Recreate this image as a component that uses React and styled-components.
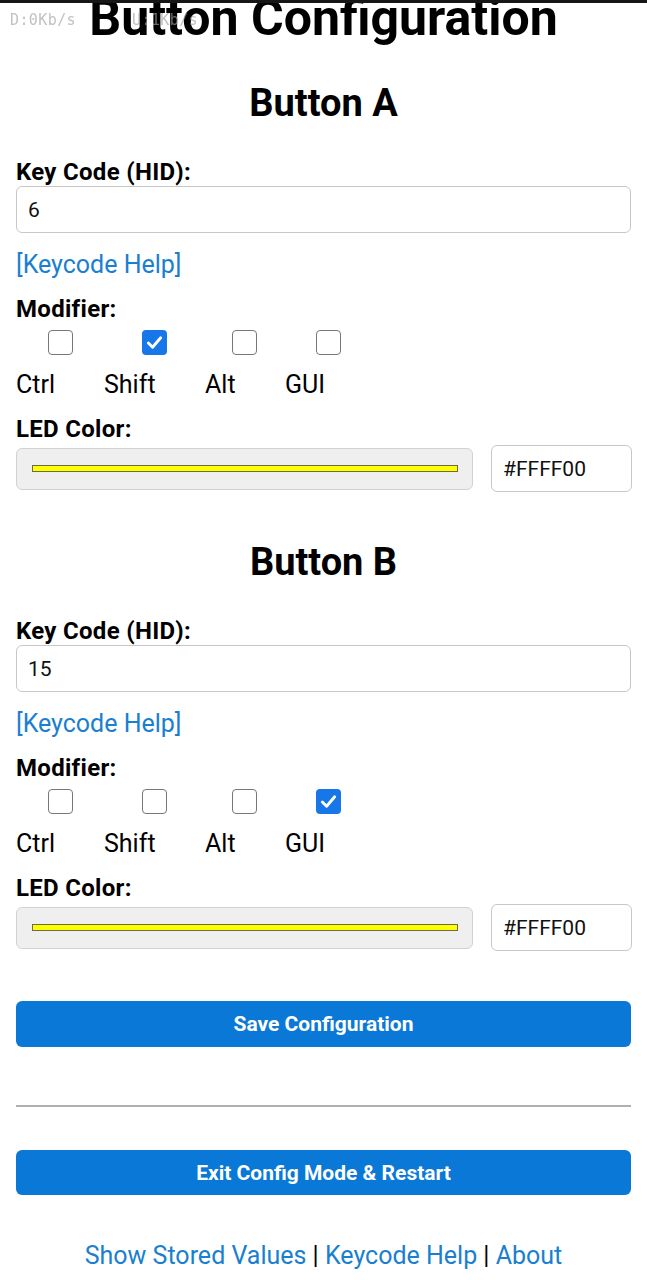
import React from "react";
import styled, { createGlobalStyle } from "styled-components";

const Global = createGlobalStyle`
  html, body { margin: 0; padding: 0; background: #fff; }
  body { font-family: Roboto, "Noto Sans", Arial, sans-serif; color: #000; }
  * { box-sizing: border-box; }
`;

const StatusOverlay = styled.div`
  position: fixed;
  top: 0;
  left: 0;
  right: 0;
  height: 40px;
  pointer-events: none;
  z-index: 5;
  &::before {
    content: "";
    position: absolute;
    top: 0;
    left: 0;
    right: 0;
    height: 3px;
    background: #161616;
  }
`;

const SpeedRow = styled.div`
  display: flex;
  gap: 56px;
  padding: 11px 0 0 10px;
`;

const Speed = styled.span`
  font-family: "DejaVu Sans Mono", monospace;
  font-size: 15px;
  line-height: 18px;
  letter-spacing: 0.4px;
  color: rgba(160, 160, 160, 0.65);
`;

const Page = styled.main`
  padding: 0 16px 40px;
`;

const Title = styled.h1`
  margin: -5px 0 0;
  font-size: 50px;
  line-height: 46px;
  font-weight: 700;
  text-align: center;
`;

const Section = styled.section`
  & + & {
    padding-top: 8px;
  }
`;

const SectionTitle = styled.h2`
  margin: 40px 0 0;
  font-size: 38px;
  line-height: 44px;
  font-weight: 700;
  text-align: center;
`;

const FieldLabel = styled.label`
  display: block;
  margin-top: ${(p) => p.$mt}px;
  font-size: 24px;
  line-height: 28px;
  letter-spacing: 0.3px;
  font-weight: 700;
`;

const TextInput = styled.input`
  display: block;
  width: ${(p) => p.$w || "100%"};
  height: 47px;
  margin: 0;
  padding: 0 11px;
  border: 1px solid #c8c8c8;
  border-radius: 6px;
  background: #fff;
  font-family: Roboto, sans-serif;
  font-size: 21px;
  color: #111;
  outline: none;
`;

const HelpLink = styled.a`
  display: block;
  width: max-content;
  margin-top: 18px;
  font-size: 25px;
  line-height: 28px;
  color: #1a7fd0;
  text-decoration: none;
`;

const ModGrid = styled.div`
  display: grid;
  grid-template-columns: 88px 101px 80px auto;
  margin-top: 7px;
`;

const ModItem = styled.label`
  display: flex;
  flex-direction: column;
  align-items: flex-start;
`;

const Box = styled.span`
  display: flex;
  align-items: center;
  justify-content: center;
  width: 25px;
  height: 25px;
  margin-left: ${(p) => p.$offset}px;
  border-radius: 4px;
  border: ${(p) => (p.$checked ? "none" : "1.5px solid #777")};
  background: ${(p) => (p.$checked ? "#1877e8" : "#fff")};
`;

const ModText = styled.span`
  margin-top: 15px;
  font-size: 25px;
  line-height: 30px;
`;

const ColorRow = styled.div`
  display: flex;
  align-items: center;
  gap: 18px;
  margin-top: 2px;
`;

const ColorSwatch = styled.div`
  flex: 0 0 457px;
  height: 42px;
  display: flex;
  align-items: center;
  padding: 0 14px 0 15px;
  background: #efefef;
  border: 1px solid #d2d2d2;
  border-radius: 6px;
`;

const SwatchBar = styled.div`
  flex: 1;
  height: 7px;
  background: ${(p) => p.$color};
  border: 1px solid #6b6b4a;
`;

const PrimaryButton = styled.button`
  display: block;
  width: 100%;
  height: ${(p) => p.$h}px;
  margin-top: ${(p) => p.$mt}px;
  border: none;
  border-radius: 6px;
  background: #0a78d6;
  color: #fff;
  font-family: Roboto, sans-serif;
  font-size: 21px;
  font-weight: 700;
`;

const Divider = styled.hr`
  margin: 58px 0 0;
  border: none;
  height: 2px;
  background: #b0b0b0;
`;

const Footer = styled.nav`
  margin-top: 46px;
  text-align: center;
  font-size: 25px;
  line-height: 30px;
`;

const FooterLink = styled.a`
  color: #1a7fd0;
  text-decoration: none;
`;

const Check = () => (
  <svg width="19" height="19" viewBox="0 0 20 20" aria-hidden="true">
    <path d="M3.5 10.5 L8 15 L16.5 5" fill="none" stroke="#fff" strokeWidth="3" strokeLinecap="round" strokeLinejoin="round" />
  </svg>
);

const MODS = [
  { name: "Ctrl", offset: 32 },
  { name: "Shift", offset: 38 },
  { name: "Alt", offset: 27 },
  { name: "GUI", offset: 31 },
];

const ButtonSection = ({ title, code, checked }) => (
  <Section>
    <SectionTitle>{title}</SectionTitle>
    <FieldLabel $mt={33}>Key Code (HID):</FieldLabel>
    <TextInput defaultValue={code} />
    <HelpLink href="#">[Keycode Help]</HelpLink>
    <FieldLabel $mt={16}>Modifier:</FieldLabel>
    <ModGrid>
      {MODS.map((m) => (
        <ModItem key={m.name}>
          <Box $offset={m.offset} $checked={checked === m.name}>
            {checked === m.name && <Check />}
          </Box>
          <ModText>{m.name}</ModText>
        </ModItem>
      ))}
    </ModGrid>
    <FieldLabel $mt={15}>LED Color:</FieldLabel>
    <ColorRow>
      <ColorSwatch>
        <SwatchBar $color="#ffff00" />
      </ColorSwatch>
      <TextInput $w="141px" defaultValue="#FFFF00" />
    </ColorRow>
  </Section>
);

export default function App() {
  return (
    <>
      <Global />
      <StatusOverlay>
        <SpeedRow>
          <Speed>D:0Kb/s</Speed>
          <Speed>U:1Kb/s</Speed>
        </SpeedRow>
      </StatusOverlay>
      <Page>
        <Title>Button Configuration</Title>
        <ButtonSection title="Button A" code="6" checked="Shift" />
        <ButtonSection title="Button B" code="15" checked="GUI" />
        <PrimaryButton $mt={50} $h={46}>Save Configuration</PrimaryButton>
        <Divider />
        <PrimaryButton $mt={43} $h={45}>Exit Config Mode &amp; Restart</PrimaryButton>
        <Footer>
          <FooterLink href="#">Show Stored Values</FooterLink> |{" "}
          <FooterLink href="#">Keycode Help</FooterLink> |{" "}
          <FooterLink href="#">About</FooterLink>
        </Footer>
      </Page>
    </>
  );
}
